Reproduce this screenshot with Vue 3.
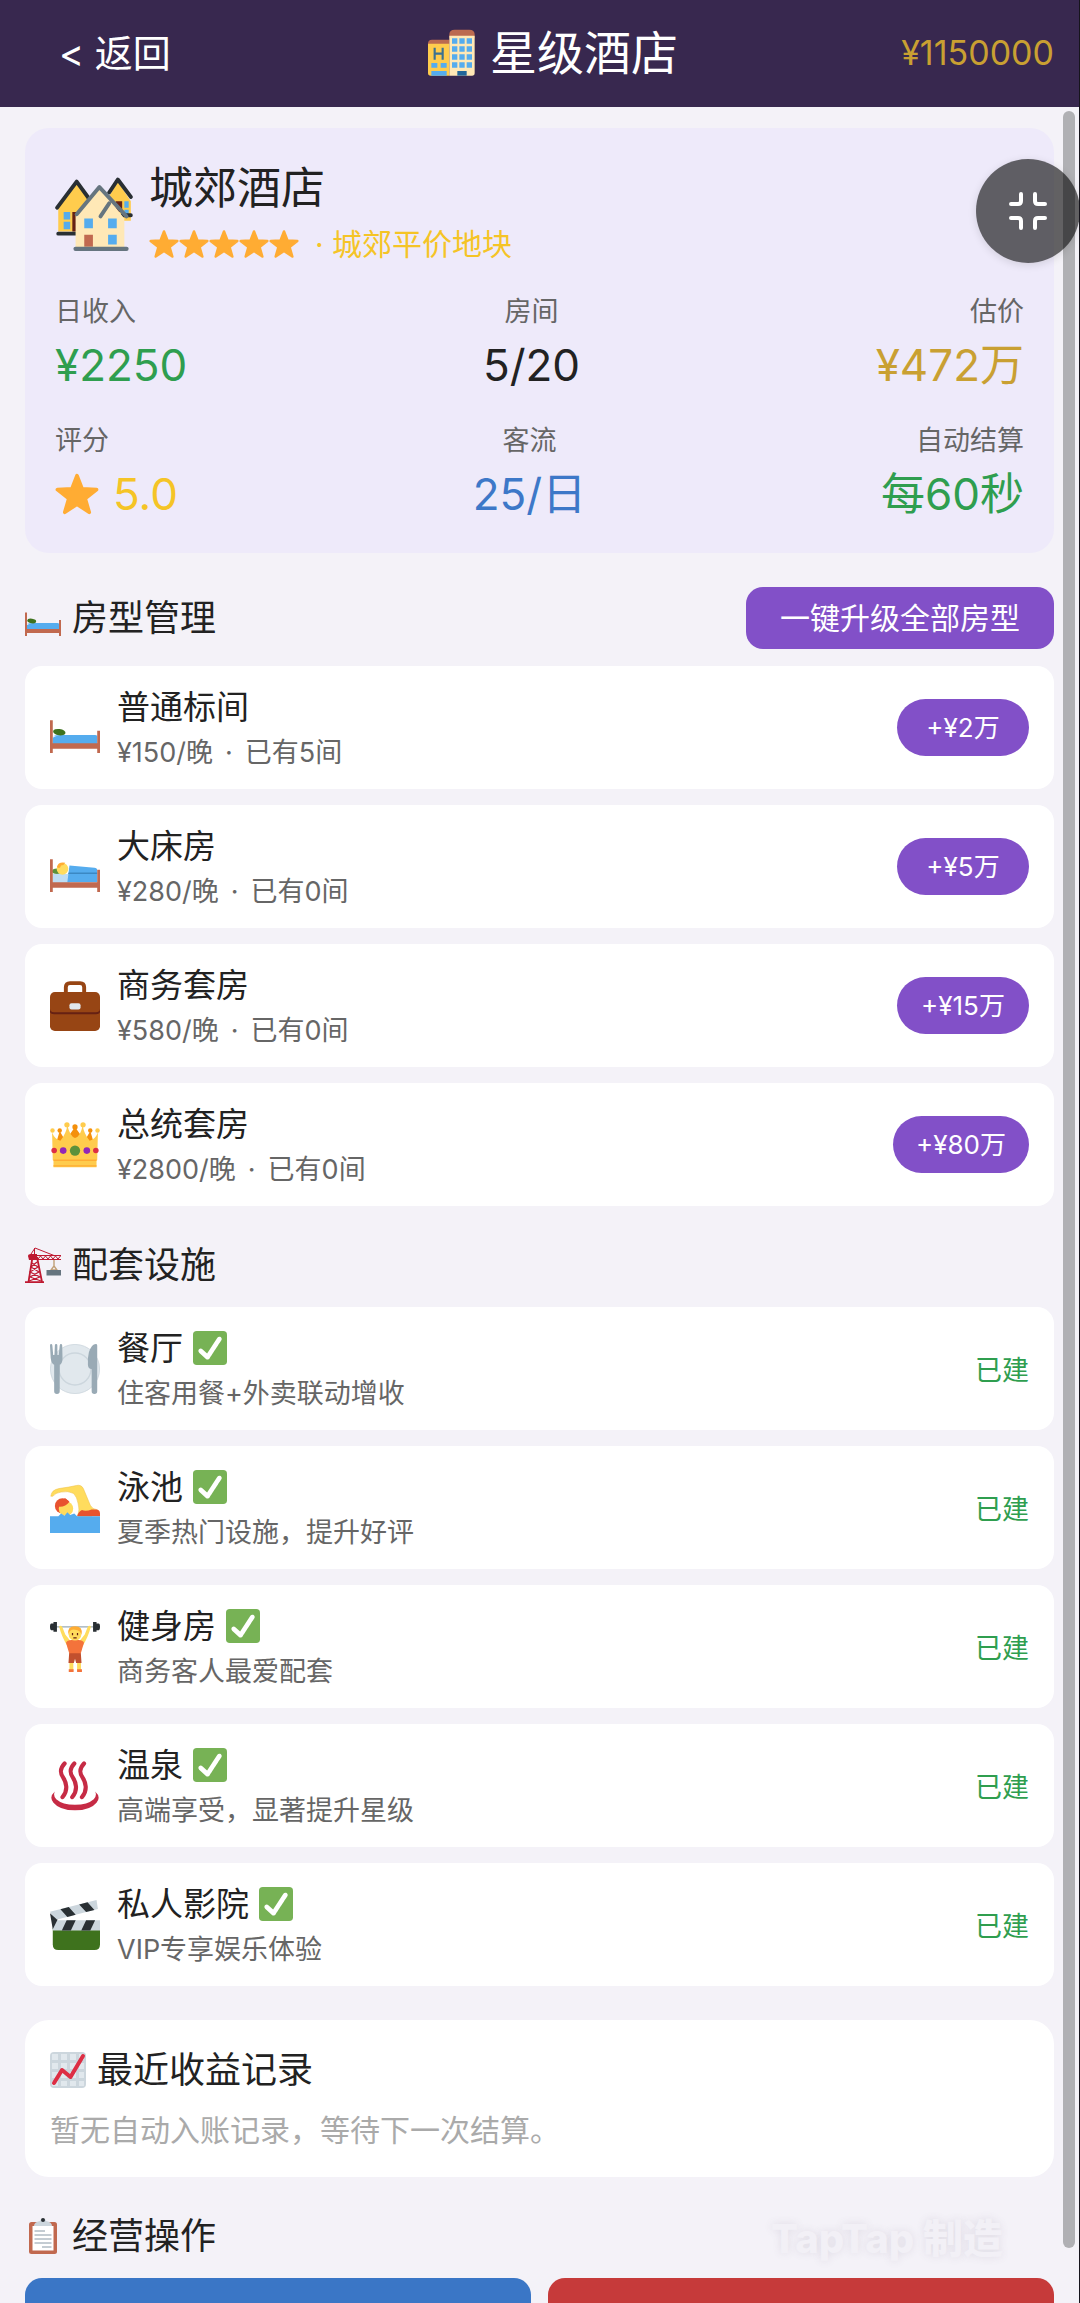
<template>
  <div class="page">
    <svg class="sprite" aria-hidden="true">
      <symbol id="hotel" viewBox="0 0 36 36">
        <path fill="#BB6A50" d="M0 11q0-3 3-3h13v5H0zM16 4q0-3.500 4-3.500h11q4 0 4 3.500v3H16z" />
        <path fill="#FFCC4D" d="M0 11h16v24H2q-2 0-2-2z" />
        <path fill="#FFE8B6" d="M16 5h19v28q0 2-2 2H16z" />
        <path fill="none" stroke="#3B7191" stroke-width="1.600" d="M5 14v9M11 14v9M5 18.500h6" />
        <path
          fill="#55ACEE"
          d="M18 7h4v4h-4zM23.500 7h4v4h-4zM29 7h4v4h-4zM18 13h4v4h-4zM23.500 13h4v4h-4zM29 13h4v4h-4zM18 19h4v4h-4zM23.500 19h4v4h-4zM29 19h4v4h-4zM18 25h4v4h-4zM23.500 25h4v4h-4zM29 25h4v4h-4zM2.500 25.500H7V29H2.500zM9.500 25.500H14V29H9.500zM2.500 31.500H14V35H2.500z"
        />
        <path fill="#226699" d="M22 31.500h7V35h-7z" />
      </symbol>
      <symbol id="village" viewBox="0 0 36 36">
        <path fill="#FFCC4D" d="M1.500 16 10 5l9 10v12H1.500zM23 14l6-10 6 9v9H24z" />
        <path fill="#662113" d="M8 18h4v9H8zM28 13h3v5h-3z" />
        <path fill="#55ACEE" d="M4 18h3v3.500H4zM4 22.500h3v3.500H4zM32 13h2v3h-2zM32 17h2v3h-2z" />
        <path
          fill="none"
          stroke="#292F33"
          stroke-width="1.800"
          stroke-linecap="round"
          stroke-linejoin="round"
          d="M1 16 10 4l8 11M25 9l4-6 6 8M1.500 28H10M31 19.500h4"
        />
        <path fill="#FFE8B6" d="M9.500 19 21 7l11 14v13.500H9.500z" />
        <path
          fill="none"
          stroke="#66757F"
          stroke-width="1.800"
          stroke-linecap="round"
          stroke-linejoin="round"
          d="M10 19 20.500 6.500 33 20M21 20l4-6"
        />
        <path fill="#55ACEE" d="M13.500 21h4v4.500h-4zM24.500 21h4v4.500h-4zM24.500 28.500h4V33h-4z" />
        <path fill="#C1694F" d="M13.500 28.500h4V34h-4z" />
        <path stroke="#66757F" stroke-width="2" stroke-linecap="round" d="M9.500 35H33" />
      </symbol>
      <symbol id="star" viewBox="0 0 36 36">
        <path
          fill="#FFAC33"
          stroke="#FFAC33"
          stroke-width="3"
          stroke-linejoin="round"
          d="m18 3 4.200 10.800 11.800.600-9.300 7.300L28 33l-10-6.700L8 33l3.300-11.300L2 14.400l11.800-.600z"
        />
      </symbol>
      <symbol id="bed" viewBox="0 0 36 36">
        <path fill="#8CCAF7" d="M2 24q3-2 7-1h23l2 1z" />
        <path fill="#55ACEE" d="M2 25q3-2 8-2h22q2 0 2 1v5.500H2z" />
        <ellipse cx="6.700" cy="21" rx="4.500" ry="2.300" fill="#3E721D" transform="rotate(8 6.700 21)" />
        <path fill="#C1694F" d="M0 12.500h2V29h32v-9h2v16h-2v-3H2v3H0z" />
      </symbol>
      <symbol id="sleeper" viewBox="0 0 36 36">
        <ellipse cx="5" cy="21" rx="3.500" ry="2" fill="#5C913B" />
        <path fill="#BDDDF4" d="M2 23h12v7H2z" />
        <circle cx="9" cy="19.300" r="4.200" fill="#FFDC5D" />
        <path fill="#FFAC33" d="M5 18q1-4 6-3-1 2-3 2-1 3-3 1z" />
        <path fill="#55ACEE" d="M14 17l18 1.500q2 0 2 2V29H12.500z" />
        <path fill="#3B88C3" d="M13.500 22H34v1H13z" />
        <path fill="#C1694F" d="M0 12.500h2V29h32v-9h2v16h-2v-3H2v3H0z" />
      </symbol>
      <symbol id="briefcase" viewBox="0 0 36 36">
        <path fill="none" stroke="#974514" stroke-width="2.800" d="M11.400 9V4.500q0-3 3-3h7.200q3 0 3 3V9" />
        <rect y="8" width="36" height="28" rx="3.500" fill="#974514" />
        <path fill="#662113" d="M0 20q0 2.500 3 2.500h30q3 0 3-2.500v2q0 2-3 2H3q-3 0-3-2z" />
        <rect x="14" y="16" width="8" height="4.500" rx="1.500" fill="#E1E8ED" />
      </symbol>
      <symbol id="crown" viewBox="0 0 36 36">
        <path fill="#F4900C" d="M4 18 7 8l4 7 7-10 7 10 4-7 3 10z" />
        <circle cx="7" cy="7.500" r="1.600" fill="#F4900C" />
        <circle cx="18" cy="5" r="1.900" fill="#F4900C" />
        <circle cx="29" cy="7.500" r="1.600" fill="#F4900C" />
        <path fill="#FFCC4D" d="M2 29 1.500 9q2 5 6 6 4-5 5-11 2 8 5.500 9Q22 12 23.500 4q1 6 5 11 4-1 6-6L34 29z" />
        <path fill="#FFCC4D" d="M2.500 28h31v6h-31z" />
        <path fill="#FFAC33" d="M2.500 28.500h31v1h-31zM2.500 32.500h31v1h-31z" />
        <g fill="#FFCC4D">
          <circle cx="1.800" cy="7.500" r="1.600" />
          <circle cx="12.200" cy="3.500" r="1.900" />
          <circle cx="23.800" cy="3.500" r="1.900" />
          <circle cx="34.200" cy="7.500" r="1.600" />
        </g>
        <circle cx="18" cy="22" r="3.700" fill="#5C913B" />
        <circle cx="9.500" cy="22" r="2.400" fill="#9226B6" />
        <circle cx="26.500" cy="22" r="2.400" fill="#9226B6" />
        <circle cx="3" cy="22" r="2" fill="#DD2E44" />
        <circle cx="33" cy="22" r="2" fill="#DD2E44" />
      </symbol>
      <symbol id="crane" viewBox="0 0 36 36">
        <path fill="none" stroke="#BE1931" stroke-width="1" d="M4 10 10 1l19 7.500M9.500 1v8" />
        <path fill="none" stroke="#BE1931" stroke-width="1.800" d="M7.500 10 3.500 35M12 10l5 25" />
        <path fill="none" stroke="#BE1931" stroke-width="1.200" d="m7 16 6 4-8 5 10 5-11 4M12 15l-6 5 8 5-9 5 11 4" />
        <path fill="#BE1931" d="M3 9q0-2 3-2h6v6H4zM0 34.200h19V36H0z" />
        <path fill="none" stroke="#BE1931" stroke-width="1" d="M12 8.500h24M12 12.500h24M13 12l2.500-3 2.500 3 2.500-3 2.500 3 2.500-3 2.500 3 2.500-3 2.500 3 2.500-3" />
        <path fill="none" stroke="#C1A077" stroke-width="1.400" d="M29 13v6l-3 4h6l-3-4" />
        <path fill="#66757F" d="M21.500 23H36v5.500H21.500z" />
      </symbol>
      <symbol id="plate" viewBox="0 0 36 36">
        <circle cx="18" cy="18" r="17.700" fill="#E1E8ED" stroke="#CCD6DD" stroke-width=".6" />
        <circle cx="18" cy="18" r="11.500" fill="#E1E8ED" stroke="#CCD6DD" stroke-width="1" />
        <path
          fill="#99AAB5"
          d="M0 1q0-1 .8-1t.9 1l.6 7h.9L3.500 1q0-1 .9-1t.9 1v7h1L7 1q.1-1 .9-1t.9 1L9 10q0 4-2 5v19q0 2-2 2t-2-2V15q-2-1-2.500-5zM30 34q0 2 2 2t2-2V1q0-1-1-1-3 0-5 6-1 4-.7 9 .1 3 2.700 3z"
        />
      </symbol>
      <symbol id="swimmer" viewBox="0 0 36 36">
        <path
          fill="#FFDC5D"
          stroke="#EEC24A"
          stroke-width=".4"
          d="M.6 9.500Q1 5 6.500 4 14 3 19 1.800q3.500-.8 5 2.200l5 12q1.500 3 5 3.300L30 24H20q1.500-5 .3-9-.8-5-3.300-7.500Q13 5.500 8 6.500 4 7 2 9.500z"
        />
        <path fill="#E8532F" d="M19.500 24q1-3.500 3.500-4.500 3 1 7-.500h3q3 0 3 3v2z" />
        <circle cx="9" cy="16.500" r="5.500" fill="#E8532F" />
        <circle cx="11.500" cy="18.500" r="5.200" fill="#FFDC5D" />
        <path fill="#E8532F" d="M6 17q5 .5 8-3.500l-3-2.500-5 2z" />
        <path fill="#55ACEE" d="M0 24h6l2-2 2.500 1.500 2-2.500 2 2 3-1 2 2H36v12H0z" />
      </symbol>
      <symbol id="lifter" viewBox="0 0 36 36">
        <path stroke="#99AAB5" stroke-width="1" d="M1 3.500h34" />
        <path fill="#292F33" d="M1 1h1.500V0H5v7H2.500V6H1Q0 6 0 3.500T1 1zM35 1h-1.500V0H31v7h2.500V6H35q1 0 1-2.500T35 1z" />
        <path fill="#FFDC5D" d="M6.500 3q2-1 2.500 1l2 5 4 5-2 4Q8.500 11 6.500 3zM29.500 3q-2-1-2.500 1l-2 5-4 5 2 4q4.500-7 6.500-15z" />
        <path fill="#F4733B" d="M11.500 15q1-2 4-2h5q3 0 4 2L22 23h-8z" />
        <path fill="#FFDC5D" d="M14 26h2.800v9H14zM19.500 26h2.800v9h-2.800z" />
        <path fill="#C1502E" d="M13.800 22.500h8.400l.5 7h-3.900l-.8-3-.8 3h-3.900z" />
        <path fill="#F4733B" d="M13.500 34H17v2h-3.500zM19.500 34H23v2h-3.500z" />
        <circle cx="18" cy="8.800" r="4.600" fill="#FFDC5D" />
        <path fill="#FFAC33" d="M13.200 9q-1-6 4.800-6t4.800 6q-1-3-4.800-3.500T13.200 9z" />
        <path stroke="#662113" stroke-width=".9" d="M16.200 8v1.500M19.800 8v1.500M16.800 11.500h2.400" />
      </symbol>
      <symbol id="spring" viewBox="0 0 36 36">
        <g fill="none" stroke="#C62B45" stroke-width="3" stroke-linecap="round">
          <path d="M10.500 1.800C6.500 6 7.500 9 9.500 12s4 9-.5 14M17.500 1.800c-4 4.200-3 7.200-1 10.200s4 9-.5 14M24.500 1.800c-4 4.200-3 7.200-1 10.200s4 9-.5 14" />
        </g>
        <path fill="#C62B45" d="M3.500 22Q-1 26 2.500 30 7 35.500 18 35.500T33.500 30Q37 26 32.500 22q1.500 3-1 5.500Q27 31.500 18 31.500T4.500 27.500Q2 25 3.500 22z" />
      </symbol>
      <symbol id="clapper" viewBox="0 0 36 36">
        <path fill="#3E721D" d="M2 20h34v12q0 4-4 4H6q-4 0-4-4z" />
        <path fill="#CCD6DD" d="M2 14.500h34V22H2zM0 8.500 33.500 0l1 6.500L3 14.500z" />
        <path
          fill="#292F33"
          d="m2 15 2-1h1.500L2 21zM12 14.500h6.500L15 22H8.500zM26 14.500h6.500L29 22h-6.500zM7.500 6.700l6-1.600 5 5.600-6 1.600zM21 3.200l6-1.500 5 5.500-6 1.500zM0 9.500l5 4.500-3 7z"
        />
      </symbol>
      <symbol id="chart" viewBox="0 0 36 36">
        <rect width="36" height="36" rx="4" fill="#CCD6DD" />
        <path
          fill="#E1E8ED"
          d="M2 2h6v6H2zM11 2h6v6h-6zM20 2h6v6h-6zM29 2h5v6h-5zM2 11h6v6H2zM11 11h6v6h-6zM20 11h6v6h-6zM29 11h5v6h-5zM2 20h6v6H2zM11 20h6v6h-6zM20 20h6v6h-6zM29 20h5v6h-5zM2 29h6v5H2zM11 29h6v5h-6zM20 29h6v5h-6zM29 29h5v5h-5z"
        />
        <path fill="none" stroke="#DD2E44" stroke-width="4" stroke-linecap="round" stroke-linejoin="round" d="m4 31 8-13 8.500 7L33 4" />
      </symbol>
      <symbol id="clipboard" viewBox="0 0 36 36">
        <rect x="4" y="4" width="28" height="32" rx="2.500" fill="#C1694F" />
        <path fill="#FFF" d="M7.500 8h21v24.500h-21z" />
        <path fill="#CCD6DD" d="M9 8q0-4 6-5 0-2 3-2t3 2q6 1 6 5z" />
        <circle cx="18" cy="2" r="2" fill="#292F33" />
        <path stroke="#8899A6" stroke-width="1" d="M9.500 13H20M9.500 17h17M9.500 21h17M9.500 25h17M17 29h9.500" />
      </symbol>
      <symbol id="check" viewBox="0 0 36 36">
        <rect width="36" height="36" rx="4" fill="#77B255" />
        <path
          fill="#FFF"
          d="M29.280 6.362c-1.156-.751-2.704-.422-3.458.736L14.936 23.877l-5.029-4.650c-1.014-.938-2.596-.875-3.533.138-.937 1.014-.875 2.596.139 3.533l7.209 6.666c.48.445 1.090.665 1.696.665.673 0 1.534-.282 2.099-1.139.332-.506 12.500-19.270 12.500-19.270.751-1.159.421-2.707-.737-3.458z"
        />
      </symbol>
    </svg>

    <header class="topbar">
      <button type="button" class="back">&lt; 返回</button>
      <h1 class="topbar-title">
        <svg class="icon icon-48"><use href="#hotel" /></svg>
        星级酒店
      </h1>
      <span class="money">¥1150000</span>
    </header>

    <main class="content">
      <section class="hotel">
        <div class="hotel-head">
          <svg class="icon icon-78"><use href="#village" /></svg>
          <div>
            <h2 class="hotel-name">{{ hotel.name }}</h2>
            <p class="hotel-plot">
              <span class="stars">
                <svg v-for="n in hotel.stars" :key="n" class="icon icon-30"><use href="#star" /></svg>
              </span>
              · {{ hotel.plot }}
            </p>
          </div>
        </div>
        <div v-for="(row, i) in stats" :key="i" class="stats">
          <div v-for="stat in row" :key="stat.label" class="stat">
            <span class="stat-label">{{ stat.label }}</span>
            <span class="stat-value" :class="stat.tone">
              <svg v-if="stat.icon" class="icon icon-44"><use :href="'#' + stat.icon" /></svg>
              {{ stat.value }}
            </span>
          </div>
        </div>
      </section>

      <div class="section-head">
        <h2 class="section-title">
          <svg class="icon icon-36"><use href="#bed" /></svg>
          房型管理
        </h2>
        <button type="button" class="upgrade-all">一键升级全部房型</button>
      </div>
      <ul class="list">
        <li v-for="room in rooms" :key="room.name" class="item">
          <svg class="icon icon-50"><use :href="'#' + room.icon" /></svg>
          <div class="item-body">
            <h3 class="item-name">{{ room.name }}</h3>
            <p class="item-desc rate">
              <span>¥{{ room.price }}/晚</span>
              <span>·</span>
              <span>已有{{ room.count }}间</span>
            </p>
          </div>
          <button type="button" class="buy">+¥{{ room.cost }}万</button>
        </li>
      </ul>

      <div class="section-head">
        <h2 class="section-title">
          <svg class="icon icon-36"><use href="#crane" /></svg>
          配套设施
        </h2>
      </div>
      <ul class="list">
        <li v-for="facility in facilities" :key="facility.name" class="item">
          <svg class="icon icon-50"><use :href="'#' + facility.icon" /></svg>
          <div class="item-body">
            <h3 class="item-name">
              {{ facility.name }}
              <svg class="icon icon-34"><use href="#check" /></svg>
            </h3>
            <p class="item-desc">{{ facility.desc }}</p>
          </div>
          <span class="built">已建</span>
        </li>
      </ul>

      <section class="income">
        <h2 class="section-title">
          <svg class="icon icon-36"><use href="#chart" /></svg>
          最近收益记录
        </h2>
        <p class="income-empty">暂无自动入账记录，等待下一次结算。</p>
      </section>

      <div class="section-head">
        <h2 class="section-title">
          <svg class="icon icon-36"><use href="#clipboard" /></svg>
          经营操作
        </h2>
      </div>
      <div class="actions">
        <button type="button" class="action blue-bg">装修升级</button>
        <button type="button" class="action red-bg">出售酒店</button>
      </div>
    </main>

    <div class="scrollbar"></div>
    <div class="watermark">TapTap 制造</div>
    <button type="button" class="shrink" aria-label="退出全屏">
      <svg class="icon icon-40" viewBox="0 0 40 40">
        <path
          fill="none"
          stroke="#fff"
          stroke-width="4"
          stroke-linecap="round"
          stroke-linejoin="round"
          d="M3 13h7q3 0 3-3V3M27 3v7q0 3 3 3h7M3 27h7q3 0 3 3v7M27 37v-7q0-3 3-3h7"
        />
      </svg>
    </button>
  </div>
</template>

<script setup>
const hotel = { name: '城郊酒店', stars: 5, plot: '城郊平价地块' }

const stats = [
  [
    { label: '日收入', value: '¥2250', tone: 'green' },
    { label: '房间', value: '5/20', tone: 'dark' },
    { label: '估价', value: '¥472万', tone: 'gold' },
  ],
  [
    { label: '评分', value: '5.0', tone: 'yellow', icon: 'star' },
    { label: '客流', value: '25/日', tone: 'blue' },
    { label: '自动结算', value: '每60秒', tone: 'green' },
  ],
]

const rooms = [
  { icon: 'bed', name: '普通标间', price: 150, count: 5, cost: 2 },
  { icon: 'sleeper', name: '大床房', price: 280, count: 0, cost: 5 },
  { icon: 'briefcase', name: '商务套房', price: 580, count: 0, cost: 15 },
  { icon: 'crown', name: '总统套房', price: 2800, count: 0, cost: 80 },
]

const facilities = [
  { icon: 'plate', name: '餐厅', desc: '住客用餐+外卖联动增收' },
  { icon: 'swimmer', name: '泳池', desc: '夏季热门设施，提升好评' },
  { icon: 'lifter', name: '健身房', desc: '商务客人最爱配套' },
  { icon: 'spring', name: '温泉', desc: '高端享受，显著提升星级' },
  { icon: 'clapper', name: '私人影院', desc: 'VIP专享娱乐体验' },
]
</script>

<style>
body {
  margin: 0;
  background: #f4f2f8;
}
</style>

<style scoped>
.page {
  position: relative;
  box-sizing: border-box;
  height: 100vh;
  overflow: hidden;
  border-right: 1px solid #16141c;
  background: #f4f2f8;
  color: #222;
  font-family: Inter, "Noto Sans CJK SC", sans-serif;
}

.sprite {
  position: absolute;
  width: 0;
  height: 0;
}

h1,
h2,
h3,
p,
ul {
  margin: 0;
  padding: 0;
  font-weight: 400;
  list-style: none;
}

button {
  border: 0;
  font-family: inherit;
  color: #fff;
  cursor: pointer;
}

.icon {
  flex: none;
  display: block;
}

.icon-30 { width: 30px; height: 30px; }
.icon-34 { width: 34px; height: 34px; }
.icon-36 { width: 36px; height: 36px; }
.icon-40 { width: 40px; height: 40px; }
.icon-44 { width: 44px; height: 44px; }
.icon-48 { width: 48px; height: 48px; }
.icon-50 { width: 50px; height: 50px; }
.icon-78 { width: 78px; height: 78px; }

.topbar {
  display: flex;
  align-items: center;
  justify-content: space-between;
  box-sizing: border-box;
  height: 107px;
  padding: 0 25px 2px;
  background: #38284f;
}

.back {
  padding: 0 34px;
  background: none;
  font-size: 38px;
  line-height: 58px;
}

.topbar-title {
  display: flex;
  align-items: center;
  gap: 14px;
  color: #fff;
  font-size: 47px;
  line-height: 60px;
}

.money {
  color: #c9a032;
  font-size: 34px;
}

.content {
  padding: 21px 25px 0;
}

.hotel {
  padding: 30px 30px 29px;
  border-radius: 24px;
  background: #eeeafa;
}

.hotel-head {
  display: flex;
  align-items: center;
  gap: 16px;
}

.hotel-name {
  font-size: 44px;
  line-height: 60px;
}

.hotel-plot {
  display: flex;
  align-items: center;
  gap: 16px;
  margin-top: 4px;
  color: #f5c426;
  font-size: 30px;
  line-height: 44px;
}

.stars {
  display: flex;
}

.stats {
  display: flex;
  justify-content: space-between;
  margin-top: 26px;
}

.stat {
  display: flex;
  flex-direction: column;
  align-items: center;
  gap: 3px;
}

.stat:first-child {
  align-items: flex-start;
}

.stat:last-child {
  align-items: flex-end;
}

.stat-label {
  color: #666;
  font-size: 27px;
  line-height: 40px;
}

.stat-value {
  display: flex;
  align-items: center;
  gap: 14px;
  font-size: 44px;
  line-height: 60px;
}

.green { color: #2f9e4f; }
.dark { color: #222; }
.gold { color: #c9a032; }
.yellow { color: #f5c426; }
.blue { color: #3d78c8; }

.section-head {
  display: flex;
  align-items: center;
  justify-content: space-between;
  margin: 34px 0 17px;
}

.section-title {
  display: flex;
  align-items: center;
  gap: 11px;
  font-size: 36px;
  line-height: 50px;
}

.upgrade-all {
  padding: 0 34px;
  border-radius: 17px;
  background: #8250c8;
  font-size: 30px;
  line-height: 62px;
}

.list {
  display: flex;
  flex-direction: column;
  gap: 16px;
}

.item {
  display: flex;
  align-items: center;
  gap: 17px;
  box-sizing: border-box;
  min-height: 123px;
  padding: 12px 25px;
  border-radius: 17px;
  background: #fff;
}

.item-body {
  flex: 1;
  padding-top: 4px;
}

.item-name {
  display: flex;
  align-items: center;
  gap: 10px;
  font-size: 33px;
  line-height: 46px;
}

.item-desc {
  color: #666;
  font-size: 27px;
  line-height: 46px;
}

.rate {
  display: flex;
  gap: 12px;
}

.buy {
  min-width: 132px;
  padding: 0 23px;
  border-radius: 29px;
  background: #8250c8;
  font-size: 26px;
  line-height: 57px;
}

.built {
  color: #2f9e4f;
  font-size: 27px;
}

.income {
  margin-top: 34px;
  padding: 25px 25px 27px;
  border-radius: 24px;
  background: #fff;
}

.income-empty {
  margin-top: 15px;
  color: #aaa;
  font-size: 30px;
  line-height: 40px;
}

.actions {
  display: grid;
  grid-template-columns: 1fr 1fr;
  gap: 17px;
}

.action {
  border-radius: 17px;
  font-size: 30px;
  line-height: 78px;
}

.blue-bg { background: #3a76c6; }
.red-bg { background: #c63a3a; }

.scrollbar {
  position: absolute;
  top: 111px;
  right: 4px;
  bottom: 55px;
  width: 12px;
  border-radius: 6px;
  background: #b0b0b4;
}

.watermark {
  position: absolute;
  right: 76px;
  bottom: 34px;
  color: #f2f0f6;
  font-size: 40px;
  font-weight: 800;
  line-height: 60px;
  text-shadow: 0 0 9px rgba(90, 80, 110, 0.13);
}

.shrink {
  position: absolute;
  top: 159px;
  right: -1px;
  display: flex;
  align-items: center;
  justify-content: center;
  width: 104px;
  height: 104px;
  padding: 0;
  border-radius: 50%;
  background: rgba(0, 0, 0, 0.6);
  box-shadow: 0 2px 8px rgba(0, 0, 0, 0.12);
}
</style>
